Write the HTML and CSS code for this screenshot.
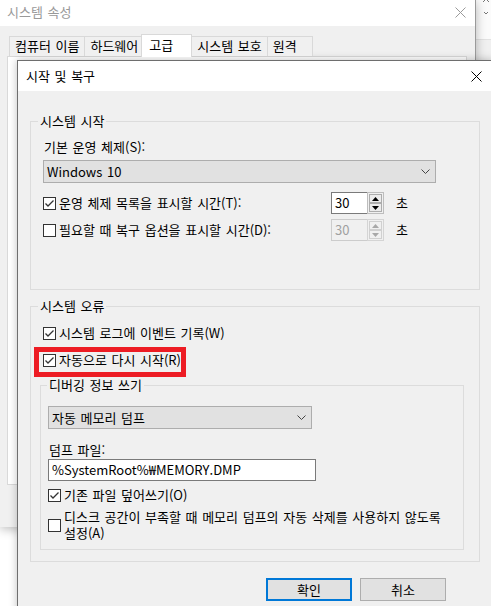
FILE: index.html
```html
<!DOCTYPE html>
<html lang="ko">
<head>
<meta charset="utf-8">
<title>시작 및 복구</title>
<link rel="stylesheet" href="styles.css">
</head>
<body>
<div class="side">
  <div class="side-top">
    <svg class="side-chev" width="8" height="20" viewBox="0 0 8 20"><polyline points="1,4 4,1 7,4" fill="none" stroke="#777" stroke-width="1"/><polyline points="2,14 4,16 6,14" fill="none" stroke="#777" stroke-width="1"/></svg>
  </div>
</div>

<div class="bgwin">
  <div class="bg-title">
    <span>시스템 속성</span>
    <svg width="11" height="11" viewBox="0 0 11 11"><path d="M0.5 0.5 L10.5 10.5 M10.5 0.5 L0.5 10.5" stroke="#9a9a9a" stroke-width="1" fill="none"/></svg>
  </div>
  <div class="bg-content">
    <div class="tabs">
      <div class="tab">컴퓨터 이름</div>
      <div class="tab">하드웨어</div>
      <div class="tab tab-active">고급</div>
      <div class="tab">시스템 보호</div>
      <div class="tab">원격</div>
    </div>
    <div class="panel"></div>
  </div>
</div>

<div class="dialog">
  <div class="dlg-title">
    <span>시작 및 복구</span>
    <svg width="11" height="11" viewBox="0 0 11 11"><path d="M0.5 0.5 L10.5 10.5 M10.5 0.5 L0.5 10.5" stroke="#000" stroke-width="1" fill="none"/></svg>
  </div>
  <div class="dlg-body">
    <fieldset class="group">
      <legend class="legend">시스템 시작</legend>
      <div class="g1-body">
        <div class="field-label">기본 운영 체제(S):</div>
        <div class="combo combo-os">
          <span>Windows 10</span>
          <svg width="9" height="5" viewBox="0 0 9 5"><polyline points="0.5,0.5 4.5,4.5 8.5,0.5" fill="none" stroke="#444" stroke-width="1"/></svg>
        </div>
        <div class="timer-row first">
          <div class="check timer-check">
            <span class="box"><svg width="11" height="11" viewBox="0 0 11 11"><polyline points="1.5,5.5 4,8 9.5,2.5" fill="none" stroke="#333" stroke-width="1.3"/></svg></span>
            <span>운영 체제 목록을 표시할 시간(T):</span>
          </div>
          <div class="spin">
            <div class="spin-field">30</div>
            <div class="spin-btns">
              <div class="spin-btn"><svg width="7" height="4" viewBox="0 0 7 4"><polygon points="0,4 3.5,0 7,4" fill="#000"/></svg></div>
              <div class="spin-btn"><svg width="7" height="4" viewBox="0 0 7 4"><polygon points="0,0 3.5,4 7,0" fill="#000"/></svg></div>
            </div>
          </div>
          <span class="unit">초</span>
        </div>
        <div class="timer-row second">
          <div class="check timer-check">
            <span class="box"></span>
            <span>필요할 때 복구 옵션을 표시할 시간(D):</span>
          </div>
          <div class="spin spin-disabled">
            <div class="spin-field">30</div>
            <div class="spin-btns">
              <div class="spin-btn"><svg width="7" height="4" viewBox="0 0 7 4"><polygon points="0,4 3.5,0 7,4" fill="#a8a8a8"/></svg></div>
              <div class="spin-btn"><svg width="7" height="4" viewBox="0 0 7 4"><polygon points="0,0 3.5,4 7,0" fill="#a8a8a8"/></svg></div>
            </div>
          </div>
          <span class="unit">초</span>
        </div>
      </div>
    </fieldset>

    <fieldset class="group group-error">
      <legend class="legend">시스템 오류</legend>
      <div class="g2-body">
        <div class="check row-log">
          <span class="box"><svg width="11" height="11" viewBox="0 0 11 11"><polyline points="1.5,5.5 4,8 9.5,2.5" fill="none" stroke="#333" stroke-width="1.3"/></svg></span>
          <span>시스템 로그에 이벤트 기록(W)</span>
        </div>
        <div class="highlight">
          <div class="check">
            <span class="box"><svg width="11" height="11" viewBox="0 0 11 11"><polyline points="1.5,5.5 4,8 9.5,2.5" fill="none" stroke="#333" stroke-width="1.3"/></svg></span>
            <span>자동으로 다시 시작(R)</span>
          </div>
        </div>
        <fieldset class="group group-debug">
          <legend class="legend legend-inner">디버깅 정보 쓰기</legend>
          <div class="g3-body">
            <div class="combo combo-dump">
              <span>자동 메모리 덤프</span>
              <svg width="9" height="5" viewBox="0 0 9 5"><polyline points="0.5,0.5 4.5,4.5 8.5,0.5" fill="none" stroke="#444" stroke-width="1"/></svg>
            </div>
            <div class="field-label dump-label">덤프 파일:</div>
            <div class="textbox">%SystemRoot%₩MEMORY.DMP</div>
            <div class="check row-over">
              <span class="box"><svg width="11" height="11" viewBox="0 0 11 11"><polyline points="1.5,5.5 4,8 9.5,2.5" fill="none" stroke="#333" stroke-width="1.3"/></svg></span>
              <span>기존 파일 덮어쓰기(O)</span>
            </div>
            <div class="check row-disk">
              <span class="box"></span>
              <span class="wrap-text">디스크 공간이 부족할 때 메모리 덤프의 자동 삭제를 사용하지 않도록 설정(A)</span>
            </div>
          </div>
        </fieldset>
      </div>
    </fieldset>

    <div class="buttons">
      <div class="btn btn-default">확인</div>
      <div class="btn">취소</div>
    </div>
  </div>
</div>
</body>
</html>
```

FILE: styles.css
```css
* { box-sizing: border-box; }
html, body { margin: 0; padding: 0; }
body {
  width: 491px;
  height: 606px;
  overflow: hidden;
  position: relative;
  background: #ffffff;
  font-family: "Noto Sans CJK KR", sans-serif;
  font-size: 13px;
  color: #000;
  word-spacing: 1px;
}

/* strip of another window on the right */
.side {
  position: absolute;
  left: 476px;
  top: 0;
  width: 15px;
  height: 60px;
  background: #f0f0f0;
}
.side-top {
  height: 40px;
  background: #fbfbfb;
  border-bottom: 1px solid #e2e2e2;
  position: relative;
}
.side-chev { position: absolute; left: 6px; top: -2px; }

/* background window: 시스템 속성 */
.bgwin {
  position: absolute;
  left: 0;
  top: 0;
  width: 476px;
  height: 527px;
  background: #f0f0f0;
  border-right: 1px solid #9a9a9a;
  box-shadow: 0 2px 10px rgba(0,0,0,0.28);
  display: flex;
  flex-direction: column;
}
.bg-title {
  height: 26px;
  flex: none;
  background: #fff;
  color: #999;
  display: flex;
  align-items: center;
  justify-content: space-between;
  padding: 0 9px 2px 7px;
  line-height: 16px;
}
.bg-title svg { margin-top: 1px; }
.bg-content { padding: 8px 0 0 7px; }
.tabs {
  display: flex;
  align-items: flex-end;
  height: 23px;
  margin-left: 2px;
  position: relative;
  z-index: 1;
}
.tab {
  height: 20px;
  min-width: 46px;
  margin-bottom: 1px;
  margin-right: -1px;
  padding: 0 5px;
  border: 1px solid #d9d9d9;
  border-bottom: 0;
  background: #f0f0f0;
  line-height: 18px;
  white-space: nowrap;
}
.tab-active {
  height: 23px;
  margin: 0 -1px 0 -2px;
  padding: 0 7px;
  min-width: 51px;
  background: #fff;
  line-height: 20px;
  position: relative;
}
.panel {
  width: 460px;
  height: 429px;
  margin-top: -1px;
  border: 1px solid #d9d9d9;
  background: #fff;
}

/* dialog: 시작 및 복구 */
.dialog {
  position: absolute;
  left: 17px;
  top: 60px;
  width: 476px;
  height: 570px;
  border: 1px solid #6e6e6e;
  background: #f0f0f0;
  box-shadow: 0 0 8px rgba(0,0,0,0.25);
}
.dlg-title {
  height: 30px;
  background: #fff;
  display: flex;
  align-items: center;
  justify-content: space-between;
  padding: 0 10px 0 8px;
  line-height: 16px;
}
.dlg-body { padding: 23px 12px 0 12px; }

.group {
  margin: 0;
  padding: 0;
  min-width: 0;
  border: 1px solid #dcdcdc;
}
.legend {
  margin-left: 7px;
  padding: 0 2px;
  line-height: 14px;
  font-size: 13px;
}
.legend-inner { margin-left: 6px; }

.g1-body { padding: 11px 0 48px 12px; }
.field-label { line-height: 16px; padding-left: 1px; }

.combo {
  height: 23px;
  margin-top: 5px;
  background: #e1e1e1;
  border: 1px solid #adadad;
  display: flex;
  align-items: center;
  justify-content: space-between;
  padding: 0 5px 0 3px;
  line-height: 16px;
}
.combo-os { width: 393px; }
.combo-dump { width: 264px; margin-top: 14px; }

.timer-row {
  display: flex;
  align-items: center;
  height: 22px;
}
.timer-row.first { margin-top: 9px; }
.timer-row.second { margin-top: 5px; }
.timer-check { width: 288px; }

.check {
  display: flex;
  align-items: center;
  gap: 3px;
  line-height: 16px;
}
.box {
  flex: none;
  width: 13px;
  height: 13px;
  border: 1px solid #333;
  background: #fff;
  display: flex;
}

.spin { display: flex; height: 22px; width: 53px; }
.spin-field {
  width: 36px;
  height: 22px;
  border: 1px solid #7a7a7a;
  border-right: 0;
  background: #fff;
  padding-left: 3px;
  line-height: 20px;
}
.spin-btns {
  width: 17px;
  height: 22px;
  border: 1px solid #bdbdbd;
  padding: 1px;
  display: flex;
  flex-direction: column;
  background: #f0f0f0;
}
.spin-btn {
  height: 9px;
  border: 1px solid #adadad;
  background: #ececec;
  display: flex;
  align-items: center;
  justify-content: center;
}
.spin-disabled .spin-field {
  border-color: #cccccc;
  background: #f0f0f0;
  color: #a0a0a0;
}
.spin-disabled .spin-btns { border-color: #d4d4d4; }
.spin-disabled .spin-btn { border-color: #d0d0d0; background: #f0f0f0; }
.unit { margin-left: 12px; line-height: 16px; }

.group-error { margin-top: 9px; }
.g2-body {
  display: flex;
  flex-direction: column;
  align-items: flex-start;
  padding: 12px 0 11px 9px;
}
.row-log { padding-left: 3px; }
.highlight {
  margin-top: 6px;
  margin-left: -6px;
  border: 5px solid #ed1c24;
  padding: 0 0 4px 4px;
}
.group-debug { width: 424px; margin-top: 1px; }
.g3-body { padding: 0 0 8px 7px; }
.dump-label { margin-top: 13px; }
.textbox {
  width: 268px;
  height: 22px;
  margin-top: 1px;
  background: #fff;
  border: 1px solid #7a7a7a;
  padding-left: 3px;
  line-height: 20px;
  word-spacing: 0;
}
.row-over { margin-top: 6px; }
.row-disk { margin-top: 6px; padding-right: 20px; }
.wrap-text { line-height: 16px; }

.buttons {
  display: flex;
  justify-content: flex-end;
  gap: 8px;
  margin-top: 16px;
  padding-right: 34px;
}
.btn {
  width: 86px;
  height: 23px;
  background: #e1e1e1;
  border: 1px solid #adadad;
  display: flex;
  align-items: center;
  justify-content: center;
  line-height: 16px;
}
.btn-default { border: 2px solid #0078d7; }
```
